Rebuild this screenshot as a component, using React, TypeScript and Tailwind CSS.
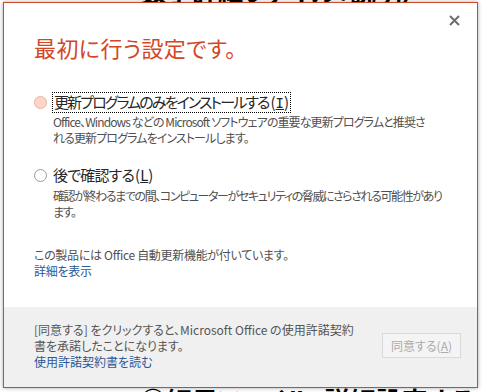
import React from "react";

const jp = "font-['Segoe_UI','Noto_Sans_CJK_JP',sans-serif] [font-feature-settings:'palt']";

export default function App() {
  return (
    <div className={`relative w-[483px] h-[392px] overflow-hidden bg-white ${jp}`}>
      {/* background page content peeking out */}
      <div className="flex flex-col justify-between h-full">
        <div className="-mt-[22px] pl-[140px] text-[26px] leading-[26px] text-black font-bold whitespace-nowrap">
          数字詳細ファイル：説明）
        </div>
        <div className="pl-[140px] mb-[-22px] text-[26px] leading-[28px] text-black font-bold whitespace-nowrap">
          ◎細目ファイル：詳細設定する
        </div>
      </div>

      {/* dialog */}
      <div className="absolute left-[3px] top-[2px] w-[475px] h-[386px] border border-[#cc4a2c] bg-white shadow-[0_0_4px_rgba(0,0,0,0.35)] flex flex-col">
        <button className="absolute right-[16px] top-[10px] w-[14px] h-[14px] flex items-center justify-center">
          <svg width="11" height="11" viewBox="0 0 11 11">
            <path d="M1 1 L10 10 M10 1 L1 10" stroke="#6e6e6e" strokeWidth="2" />
          </svg>
        </button>

        <div className="flex-1 flex flex-col pl-[30px] pr-[20px]">
          <div className="pt-[29px] text-[22px] leading-[30px] text-[#d24726] tracking-[0.4px]">
            最初に行う設定です。
          </div>

          <div className="mt-[30px] flex flex-col">
            <div className="flex items-center h-[20px]">
              <span className="w-[13px] h-[13px] rounded-full bg-[#fcd6c8] border border-[#eeb09a]" />
              <span className="ml-[5px] px-[1px] border border-dotted border-black text-[15px] leading-[18px] text-[#262626] whitespace-nowrap">
                <span className="tracking-[-1.9px]">更新プログラムのみをインストールする</span>
                <span className="ml-[2px]">(<span className="underline font-['DejaVu_Sans_Mono'] text-[14px]">I</span>)</span>
              </span>
            </div>
            <div className="mt-[2px] pl-[19px] text-[12px] leading-[16px] text-[#505050] whitespace-nowrap tracking-[-0.9px]">
              Office、Windows などの Microsoft ソフトウェアの重要な更新プログラムと推奨さ
              <br />
              れる更新プログラムをインストールします。
            </div>
          </div>

          <div className="mt-[19px] flex flex-col">
            <div className="flex items-center h-[20px]">
              <span className="w-[13px] h-[13px] rounded-full bg-white border border-[#9a9a9a]" />
              <span className="ml-[6px] text-[15px] leading-[18px] text-[#262626] whitespace-nowrap">
                <span className="tracking-[-0.8px]">後で確認する</span>
                <span className="ml-[1px]">(<span className="underline">L</span>)</span>
              </span>
            </div>
            <div className="mt-[3px] pl-[19px] text-[12px] leading-[16px] text-[#505050] whitespace-nowrap tracking-[-1.4px]">
              確認が終わるまでの間、コンピューターがセキュリティの脅威にさらされる可能性があり
              <br />
              ます。
            </div>
          </div>

          <div className="mt-[27px] text-[12px] leading-[16px] text-[#505050] whitespace-nowrap tracking-[-0.3px]">
            この製品には Office 自動更新機能が付いています。
            <div className="text-[#2b5797]">詳細を表示</div>
          </div>
        </div>

        <div className="h-[80px] bg-[#f0f0f0] flex items-start pl-[30px] pr-[16px] pt-[15px]">
          <div className="text-[12px] leading-[16px] text-[#555555] whitespace-nowrap">
            [同意する] をクリックすると、Microsoft Office の使用許諾契約
            <br />
            書を承諾したことになります。
            <div className="text-[#2b5797]">使用許諾契約書を読む</div>
          </div>
          <button className="ml-auto mt-[11px] w-[79px] h-[25px] border border-[#d9d9d9] bg-[#f4f4f4] text-[12px] text-[#ababab] flex items-center justify-center">
            同意する(<span className="underline">A</span>)
          </button>
        </div>
      </div>
    </div>
  );
}
